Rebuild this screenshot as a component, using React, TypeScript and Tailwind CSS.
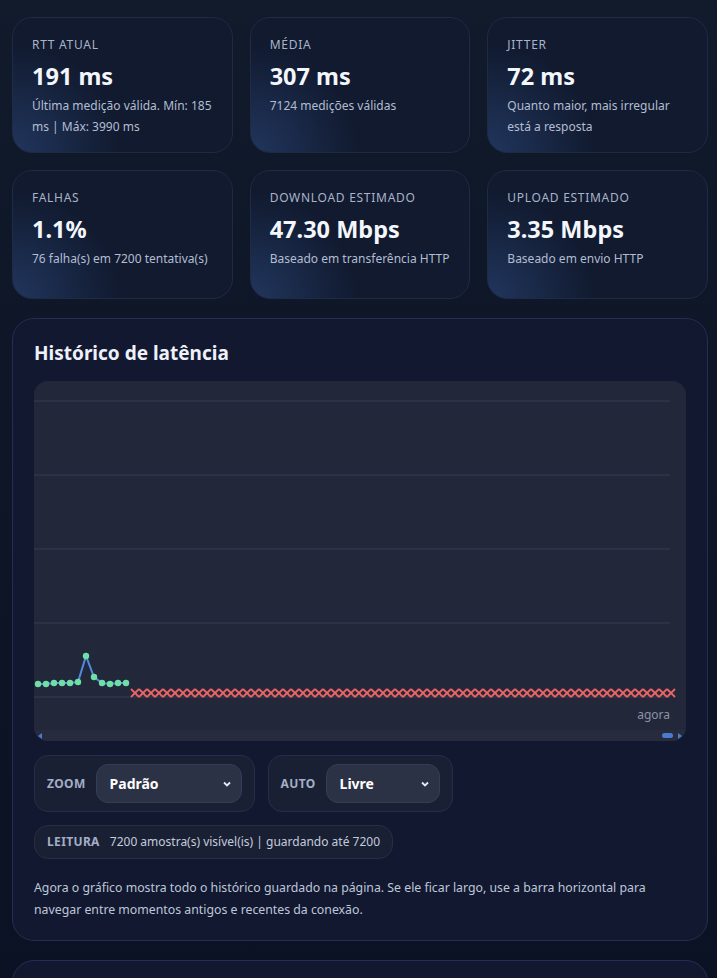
import React from 'react';

interface StatCard {
  label: string;
  value: string;
  detail: string;
}

const cards: StatCard[] = [
  { label: 'RTT atual', value: '191 ms', detail: 'Última medição válida. Mín: 185 ms | Máx: 3990 ms' },
  { label: 'Média', value: '307 ms', detail: '7124 medições válidas' },
  { label: 'Jitter', value: '72 ms', detail: 'Quanto maior, mais irregular\nestá a resposta' },
  { label: 'Falhas', value: '1.1%', detail: '76 falha(s) em 7200 tentativa(s)' },
  { label: 'Download estimado', value: '47.30 Mbps', detail: 'Baseado em transferência HTTP' },
  { label: 'Upload estimado', value: '3.35 Mbps', detail: 'Baseado em envio HTTP' },
];

// valid samples at the start of the visible window
const okPoints: [number, number][] = [
  [4, 303], [12, 303], [20, 302], [28, 302], [36, 302], [44, 301],
  [52, 275], [60, 296], [68, 302], [76, 303], [84, 302], [92, 302],
];

const failXs = Array.from({ length: 68 }, (_, i) => 101 + i * 8);

const LatencyChart: React.FC = () => {
  const line = okPoints.map(([x, y], i) => `${i === 0 ? 'M' : 'L'}${x} ${y}`).join(' ');
  return (
    <div className="rounded-[14px] bg-[#222839] overflow-hidden">
      <svg width="655" height="349" className="block">
        {[20, 94, 168, 242, 316].map((y) => (
          <line key={y} x1="0" x2="636" y1={y} y2={y} stroke="#2b3246" strokeWidth="2" />
        ))}
        <path d={line} fill="none" stroke="#4f8be0" strokeWidth="2" />
        {okPoints.map(([x, y]) => (
          <circle key={x} cx={x} cy={y} r="3.2" fill="#6ee0a6" />
        ))}
        {failXs.map((x) => (
          <g key={x} stroke="#ec6466" strokeWidth="1.8">
            <line x1={x - 4} y1={308} x2={x + 4} y2={316} />
            <line x1={x - 4} y1={316} x2={x + 4} y2={308} />
          </g>
        ))}
        <text x="636" y="338" textAnchor="end" fontSize="12" fill="#8a93a9" fontFamily="Noto Sans, sans-serif">
          agora
        </text>
      </svg>
      {/* horizontal scrollbar */}
      <div className="h-[11px] bg-[#262c3e] flex items-center px-[3px]">
        <svg width="6" height="6" viewBox="0 0 6 6">
          <path d="M5 0 L1 3 L5 6 Z" fill="#4a7bd0" />
        </svg>
        <div className="flex-1" />
        <div className="w-[11px] h-[5px] rounded-full bg-[#4a7bd0]" />
        <svg width="8" height="6" viewBox="0 0 8 6" className="ml-[2px]">
          <path d="M3 0 L7 3 L3 6 Z" fill="#4a7bd0" />
        </svg>
      </div>
    </div>
  );
};

const SelectBox: React.FC<{ label: string; value: string; width: string }> = ({ label, value, width }) => (
  <div className="flex items-center gap-[10px] h-[57px] pl-[12px] pr-[12px] rounded-[14px] border border-[#262e47] bg-[#1a2034]">
    <span className="text-[12px] font-bold tracking-[0.03em] text-[#a3aec6]">{label}</span>
    <div className={`${width} h-[39px] flex items-center justify-between pl-[13px] pr-[9px] rounded-[12px] border border-[#353d55] bg-[#2c3245]`}>
      <span className="text-[14px] font-bold text-white">{value}</span>
      <svg width="10" height="10" viewBox="0 0 10 10">
        <path d="M2 3.5 L5 6.5 L8 3.5" fill="none" stroke="#e5e9f2" strokeWidth="1.8" />
      </svg>
    </div>
  </div>
);

export default function App() {
  return (
    <div
      className="h-[978px] overflow-hidden bg-[linear-gradient(180deg,#111b2b_0%,#0e1628_40%,#0b1224_100%)] pl-3 pr-[9px] pt-[17px]"
      style={{ fontFamily: '"Noto Sans", "Open Sans", sans-serif' }}
    >
      <div className="grid grid-cols-3 gap-[17px]">
        {cards.map((c) => (
          <div
            key={c.label}
            className="min-h-[129px] rounded-[20px] border border-[#1f2a45] bg-[#111a2f] bg-[radial-gradient(circle_at_0%_100%,rgba(52,88,150,0.45),transparent_42%)] px-[19px] pt-[19px] pb-[15px]"
          >
            <div className="text-[12px] leading-4 uppercase tracking-[0.06em] text-[#a9b4ca]">{c.label}</div>
            <div className="mt-[9px] text-[23.5px] leading-[28px] font-bold text-[#f3f6fb]">{c.value}</div>
            <div className="mt-[5px] text-[12px] leading-[21px] text-[#b3bdd1] whitespace-pre-line">{c.detail}</div>
          </div>
        ))}
      </div>

      <div className="mt-[19px] rounded-[22px] border border-[#222e52] bg-[#121830] px-[21px] pt-[22px] pb-[19px]">
        <h2 className="text-[19px] leading-[24px] font-bold text-[#eef1fa]">Histórico de latência</h2>
        <div className="mt-[16px]">
          <LatencyChart />
        </div>

        <div className="mt-[14px] flex gap-[13px]">
          <SelectBox label="ZOOM" value="Padrão" width="w-[146px]" />
          <SelectBox label="AUTO" value="Livre" width="w-[114px]" />
        </div>

        <div className="mt-[13px] inline-flex items-center gap-[10px] h-[34px] px-[12px] rounded-[14px] border border-[#262e47] bg-[#1a2034]">
          <span className="text-[12px] font-bold tracking-[0.03em] text-[#a3aec6]">LEITURA</span>
          <span className="text-[12px] text-[#c3cbdc]">7200 amostra(s) visível(is) | guardando até 7200</span>
        </div>

        <p className="mt-[18px] text-[12.3px] leading-[22px] text-[#bec7d8]">
          Agora o gráfico mostra todo o histórico guardado na página. Se ele ficar largo, use a barra horizontal para
          navegar entre momentos antigos e recentes da conexão.
        </p>
      </div>

      <div className="mt-[19px] h-[60px] rounded-[22px] border border-[#222e52] bg-[#121830]" />
    </div>
  );
}
